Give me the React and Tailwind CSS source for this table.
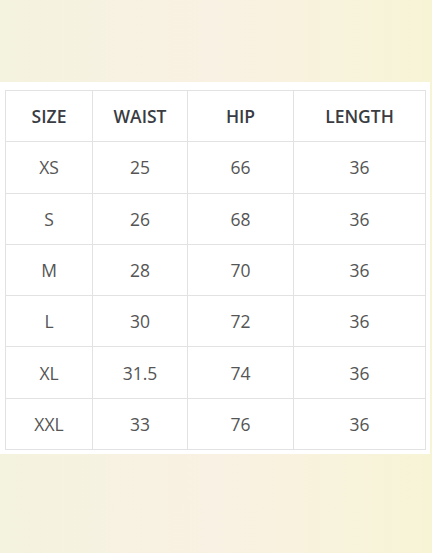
const HEAD = ['SIZE', 'WAIST', 'HIP', 'LENGTH']

const ROWS = [
  ['XS', '25', '66', '36'],
  ['S', '26', '68', '36'],
  ['M', '28', '70', '36'],
  ['L', '30', '72', '36'],
  ['XL', '31.5', '74', '36'],
  ['XXL', '33', '76', '36'],
]

const WIDTHS = ['w-[87px]', 'w-[95px]', 'w-[106px]', 'w-[132px]']

export default function App() {
  return (
    <div className="w-[432px] h-[553px] bg-gradient-to-r from-[#f4f3df] via-[#f9f1e3] to-[#f7f4d6] pt-[82px] font-['Open_Sans',sans-serif]">
      <div className="w-[430px] bg-white pl-[5px] pt-[8px] pb-[4px]">
        <table className="border-collapse table-fixed w-[420px]">
          <thead>
            <tr>
              {HEAD.map((h, i) => (
                <th
                  key={h}
                  className={`${WIDTHS[i]} h-[51.3px] border border-[#e2e2e2] text-center text-[17.5px] font-semibold text-[#393c42]`}
                >
                  {h}
                </th>
              ))}
            </tr>
          </thead>
          <tbody>
            {ROWS.map(row => (
              <tr key={row[0]}>
                {row.map((c, i) => (
                  <td key={i} className="h-[51.3px] border border-[#e2e2e2] text-center text-[17.5px] text-[#555]">
                    {c}
                  </td>
                ))}
              </tr>
            ))}
          </tbody>
        </table>
      </div>
    </div>
  )
}
